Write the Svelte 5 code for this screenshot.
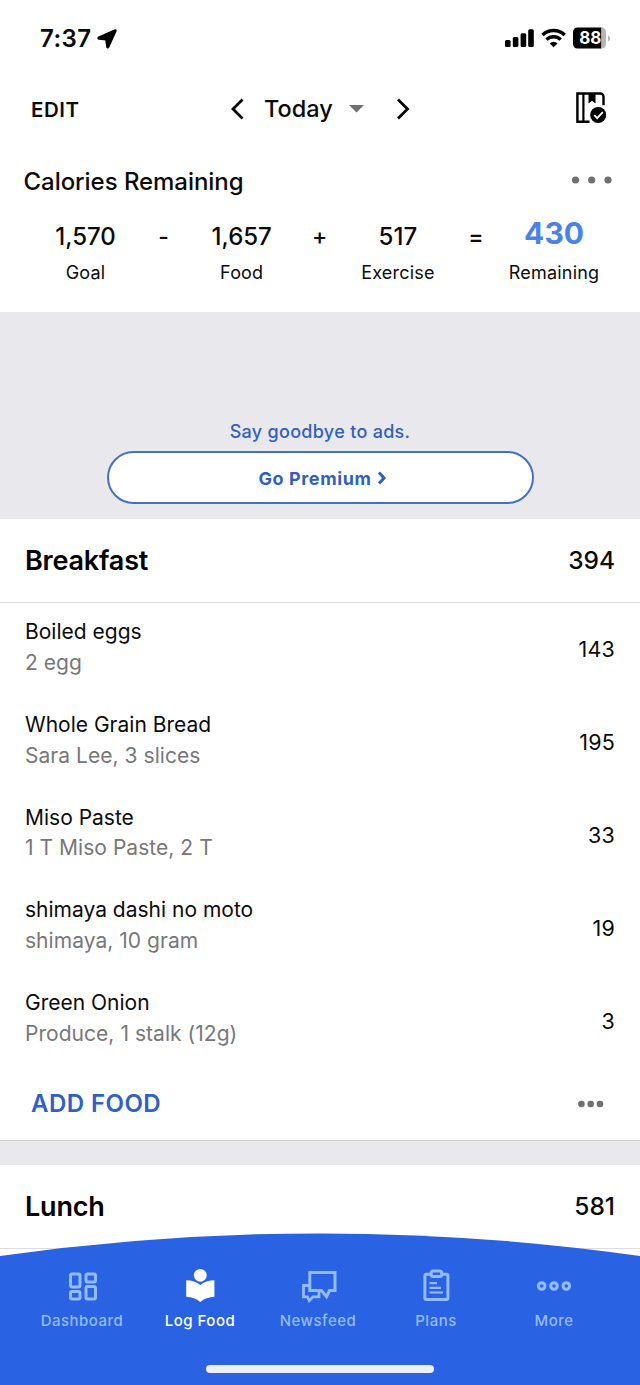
<script>
	const summary = [
		{ value: '1,570', label: 'Goal' },
		{ op: '-' },
		{ value: '1,657', label: 'Food' },
		{ op: '+' },
		{ value: '517', label: 'Exercise' },
		{ op: '=' },
		{ value: '430', label: 'Remaining', total: true }
	];

	const breakfast = [
		{ name: 'Boiled eggs', detail: '2 egg', calories: 143 },
		{ name: 'Whole Grain Bread', detail: 'Sara Lee, 3 slices', calories: 195 },
		{ name: 'Miso Paste', detail: '1 T Miso Paste, 2 T', calories: 33 },
		{ name: 'shimaya dashi no moto', detail: 'shimaya, 10 gram', calories: 19 },
		{ name: 'Green Onion', detail: 'Produce, 1 stalk (12g)', calories: 3 }
	];

	const tabs = ['Dashboard', 'Log Food', 'Newsfeed', 'Plans', 'More'];
	let active = $state('Log Food');
</script>

<div class="screen">
	<div class="status">
		<span class="time">7:37</span>
		<svg class="location" width="20" height="20" viewBox="0 0 20 20">
			<path d="M17.6 1.2 1.8 8.300c-.9.500-.7 1.400.3 1.500l7 .9.900 7c.1 1 1 1.200 1.500.3L18.700 2.200c.3-.8-.3-1.400-1.100-1z" stroke="#000" stroke-width="1.800" stroke-linejoin="round" />
		</svg>
		<svg class="signal" width="106" height="24" viewBox="0 0 106 24">
			<rect x="0" y="14" width="5.600" height="7" rx="1.500" />
			<rect x="7.800" y="11" width="5.600" height="10" rx="1.500" />
			<rect x="15.600" y="7.300" width="5.600" height="13.700" rx="1.500" />
			<rect x="23.200" y="3.300" width="5.600" height="17.700" rx="1.500" />
			<g fill="none" stroke="#000" stroke-width="3.400">
				<path d="M37.500 9a16 16 0 0 1 22.200 0" />
				<path d="M41.500 13.600a10.200 10.200 0 0 1 14.200 0" />
			</g>
			<path d="M44.700 17.400a5.700 5.700 0 0 1 7.800 0l-3.900 3.800z" />
			<path d="M72.500 1.500H96.500v21h-24A4.500 4.500 0 0 1 68 18V6a4.500 4.500 0 0 1 4.500-4.500z" />
			<path d="M96.500 1.500A4.500 4.500 0 0 1 101 6v12a4.500 4.500 0 0 1-4.500 4.500z" fill="#b5b5b5" />
			<path d="M103 9.500c2.700.8 2.700 5.200 0 6z" fill="#b5b5b5" />
			<text x="85.300" y="18.300" text-anchor="middle">88</text>
		</svg>
	</div>

	<header class="topbar">
		<button class="edit">EDIT</button>
		<svg class="prev" width="14" height="22" viewBox="0 0 14 22"><path d="M12.500 1.500 3 11l9.500 9.500" /></svg>
		<span class="today">Today</span>
		<svg class="caret" width="15" height="8" viewBox="0 0 15 8"><path d="M0 0h15L7.500 7.500z" /></svg>
		<svg class="next" width="14" height="22" viewBox="0 0 14 22"><path d="M2 1.500 11.500 11 2 20.500" /></svg>
		<svg class="diary" width="31" height="32" viewBox="0 0 31 32">
			<g fill="none" stroke="#000" stroke-width="2.400">
				<path d="M13.500 29.700H1.400V1.500h22.800a3.300 3.300 0 0 1 3.300 3.300v8.500" />
				<path d="M7.400 1.500v28.200" stroke-width="2.200" />
			</g>
			<path d="M12.500 1h7v10.500L16 8.800l-3.500 2.700z" />
			<circle cx="22.200" cy="23" r="8" />
			<path d="m18.200 23.200 3 3 5.600-6" fill="none" stroke="#fff" stroke-width="1.800" />
		</svg>
	</header>

	<section class="remaining">
		<div class="remaining-head">
			<h1>Calories Remaining</h1>
			<svg width="42" height="8" viewBox="0 0 42 8" fill="#707073">
				<circle cx="4.500" cy="4" r="3.600" /><circle cx="20.700" cy="4" r="3.600" /><circle cx="37" cy="4" r="3.600" />
			</svg>
		</div>
		<div class="sum">
			{#each summary as item}
				{#if item.op}
					<span class="op">{item.op}</span>
				{:else}
					<div class="figure" class:total={item.total}>
						<strong>{item.value}</strong>
						<span>{item.label}</span>
					</div>
				{/if}
			{/each}
		</div>
	</section>

	<section class="ad">
		<p>Say goodbye to ads.</p>
		<button class="premium">
			Go Premium
			<svg width="10" height="14" viewBox="0 0 10 14"><path d="m2 1.500 5 5.500-5 5.500" /></svg>
		</button>
	</section>

	<section class="meal">
		<div class="meal-head">
			<h2>Breakfast</h2>
			<span>394</span>
		</div>
		<ul>
			{#each breakfast as food}
				<li>
					<div class="food">
						<span class="name">{food.name}</span>
						<span class="detail">{food.detail}</span>
					</div>
					<span class="calories">{food.calories}</span>
				</li>
			{/each}
		</ul>
		<div class="meal-foot">
			<button class="add">ADD FOOD</button>
			<svg width="26" height="8" viewBox="0 0 26 8" fill="#707073">
				<circle cx="3.400" cy="4" r="3.300" /><circle cx="12.700" cy="4" r="3.300" /><circle cx="22" cy="4" r="3.300" />
			</svg>
		</div>
	</section>

	<section class="meal lunch">
		<div class="meal-head">
			<h2>Lunch</h2>
			<span>581</span>
		</div>
	</section>

	<nav class="tabbar">
		<svg class="curve" width="640" height="152" viewBox="0 0 640 152">
			<path d="M0 23A2287 2287 0 0 1 640 23V152H0z" />
		</svg>
		<div class="tabs">
			{#each tabs as tab}
				<button class:active={active === tab} onclick={() => (active = tab)}>
					<svg width="40" height="36" viewBox="0 0 40 36" fill="none" stroke="currentColor" stroke-width="3">
						{#if tab === 'Dashboard'}
							<rect x="8.500" y="6" width="9.500" height="13" rx="1.500" />
							<rect x="24" y="6" width="9.500" height="8" rx="1.500" />
							<rect x="8.500" y="23.500" width="9.500" height="7.500" rx="1.500" />
							<rect x="24" y="18.500" width="9.500" height="12.500" rx="1.500" />
						{:else if tab === 'Log Food'}
							<g fill="currentColor" stroke="none">
								<circle cx="20.300" cy="7.300" r="6.400" />
								<path d="M6.200 12.200c5.500 0 10.600 1.600 14.100 4.800 3.500-3.200 8.600-4.800 14.100-4.800v16.500c-5.400.2-10.300 2-14.100 5.300-3.800-3.300-8.700-5.100-14.100-5.300z" />
							</g>
						{:else if tab === 'Newsfeed'}
							<path d="M11.800 4.500H37v18h-5.500l-3 6.200-5-6.200H11.800z" />
							<path d="M11.800 17.500H5.500v11.300h4l1.800 3.700 3.700-3.700h6v-6" stroke-width="2.800" />
						{:else if tab === 'Plans'}
							<rect x="8.900" y="6.200" width="23" height="25.300" rx="1.500" />
							<rect x="15.200" y="3" width="10.500" height="5.500" rx="2" fill="#2962e3" />
							<path d="M13.500 15.200h7.500M13.500 19.800h11.500M13.500 24.500h13.500" stroke-width="2.200" />
						{:else}
							<circle cx="7.700" cy="18" r="3.300" />
							<circle cx="20" cy="18" r="3.300" />
							<circle cx="32.300" cy="18" r="3.300" />
						{/if}
					</svg>
					<span>{tab}</span>
				</button>
			{/each}
		</div>
		<div class="home"></div>
	</nav>
</div>

<style>
	:global(body) {
		background: #fff;
	}

	.screen {
		position: relative;
		display: flex;
		flex-direction: column;
		width: 640px;
		height: 1385px;
		overflow: hidden;
		background: #fff;
		color: #0b0b0c;
		font-family: Inter, 'Liberation Sans', sans-serif;
	}

	button {
		padding: 0;
		border: 0;
		background: none;
		color: inherit;
		font: inherit;
		letter-spacing: inherit;
		cursor: pointer;
	}

	h1,
	h2,
	p,
	ul {
		margin: 0;
		padding: 0;
	}

	svg {
		display: block;
		flex: none;
	}

	.status {
		display: flex;
		align-items: center;
		height: 77px;
		padding: 0 29px 0 40px;
		box-sizing: border-box;
	}

	.time {
		width: 57px;
		font-size: 24px;
		font-weight: 600;
		letter-spacing: 0.4px;
	}

	.signal {
		margin-left: auto;
		margin-top: -2px;
	}

	.signal text {
		fill: #fff;
		font-size: 17px;
		font-weight: 700;
	}

	.topbar {
		display: flex;
		align-items: center;
		height: 64px;
		padding: 0 33px 0 31px;
	}

	.edit {
		width: 199px;
		padding-top: 1px;
		font-size: 20.5px;
		font-weight: 600;
		letter-spacing: 0.5px;
		text-align: left;
	}

	.prev,
	.next {
		fill: none;
		stroke: #000;
		stroke-width: 2.8;
	}

	.today {
		width: 85px;
		margin-left: 20px;
		padding-bottom: 1px;
		font-size: 23.5px;
		font-weight: 500;
	}

	.caret {
		margin-left: 0;
		fill: #707073;
	}

	.next {
		margin-left: 32px;
	}

	.diary {
		margin-left: auto;
		margin-top: -2px;
	}

	.remaining {
		height: 171px;
	}

	.remaining-head {
		display: flex;
		align-items: center;
		justify-content: space-between;
		height: 77px;
		padding: 0 27px 0 23.5px;
	}

	h1 {
		padding-top: 3px;
		font-size: 24px;
		font-weight: 500;
		letter-spacing: -0.05px;
	}

	.sum {
		display: flex;
		padding-left: 35.5px;
	}

	.figure {
		display: flex;
		flex-direction: column;
		align-items: center;
		width: 100px;
	}

	.figure strong {
		height: 37px;
		font-size: 24px;
		font-weight: 500;
		line-height: 37px;
	}

	.figure span {
		font-size: 18px;
		line-height: 35px;
		letter-spacing: 0.2px;
	}

	.figure.total strong {
		color: #4a83e6;
		font-size: 30px;
		font-weight: 700;
		line-height: 31px;
	}

	.op {
		width: 56.2px;
		font-size: 23px;
		font-weight: 500;
		line-height: 38px;
		text-align: center;
	}

	.ad {
		display: flex;
		flex-direction: column;
		align-items: center;
		justify-content: flex-end;
		height: 207px;
		padding-bottom: 15px;
		box-sizing: border-box;
		background: #e9e9ed;
		color: #315fc0;
		font-size: 18px;
		letter-spacing: 0.3px;
	}

	.ad p {
		font-weight: 500;
		line-height: 38px;
	}

	.premium {
		display: flex;
		align-items: center;
		justify-content: center;
		gap: 5px;
		width: 427px;
		height: 53px;
		padding: 1px 0 0 5px;
		border: 2px solid #4570c6;
		border-radius: 27px;
		background: #fff;
		font-weight: 700;
		letter-spacing: 0.6px;
	}

	.premium svg {
		fill: none;
		stroke: #315fc0;
		stroke-width: 3;
	}

	.meal-head {
		display: flex;
		align-items: center;
		justify-content: space-between;
		height: 84px;
		padding: 0 25px;
		box-sizing: border-box;
		border-bottom: 1px solid #dcdcdf;
		font-size: 24.5px;
		font-weight: 500;
	}

	.meal-head span {
		padding-bottom: 1px;
	}

	h2 {
		color: #000;
		font-size: 27px;
		font-weight: 600;
		letter-spacing: -0.2px;
	}

	ul {
		list-style: none;
	}

	li {
		display: flex;
		align-items: center;
		justify-content: space-between;
		height: 92.8px;
		padding: 0 25px;
	}

	.food {
		display: flex;
		flex-direction: column;
		padding-bottom: 3px;
		font-size: 21px;
		line-height: 30.8px;
	}

	.detail {
		color: #77777a;
		letter-spacing: 0.04px;
	}

	.calories {
		font-size: 21.5px;
		letter-spacing: 0.2px;
	}

	.meal-foot {
		display: flex;
		align-items: center;
		justify-content: space-between;
		height: 73px;
		padding: 0 36px 0 31px;
	}

	.meal-foot svg {
		margin-top: 1px;
	}

	.add {
		color: #315fc8;
		font-size: 24px;
		font-weight: 600;
		letter-spacing: 0.45px;
	}

	.lunch::before {
		display: block;
		height: 24px;
		border-top: 1px solid #d2d2d6;
		background: #e9e9ed;
		content: '';
	}

	.tabbar {
		position: absolute;
		bottom: 0;
		left: 0;
		width: 640px;
		height: 152px;
	}

	.curve {
		position: absolute;
		inset: 0;
		fill: #2962e3;
	}

	.tabs {
		position: relative;
		display: grid;
		grid-template-columns: repeat(5, 118px);
		padding: 35px 0 0 23px;
	}

	.tabs button {
		display: flex;
		flex-direction: column;
		align-items: center;
		color: #91bbfb;
	}

	.tabs button.active {
		color: #fff;
	}

	.tabs span {
		font-size: 15px;
		font-weight: 500;
		line-height: 34px;
		letter-spacing: 0.5px;
	}

	.home {
		position: relative;
		width: 228px;
		height: 8px;
		margin: 27px auto 0;
		border-radius: 4px;
		background: #eeeef6;
	}
</style>
